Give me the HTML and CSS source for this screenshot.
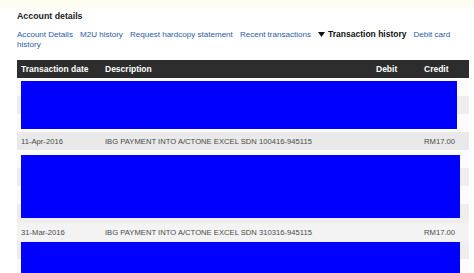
FILE: index.html
```html
<!DOCTYPE html>
<html>
<head>
<meta charset="utf-8">
<link rel="stylesheet" href="styles.css">
</head>
<body>
<div class="topband"></div>
<div class="page">
  <h1 class="title">Account details</h1>
  <div class="links">
    <a class="link">Account Details</a>
    <a class="link">M2U history</a>
    <a class="link">Request hardcopy statement</a>
    <a class="link">Recent transactions</a>
    <span class="link active"><svg class="caret" width="7" height="5" viewBox="0 0 7 5"><polygon points="0,0 7,0 3.5,5" fill="#111"/></svg>Transaction history</span>
    <a class="link">Debit card history</a>
  </div>
  <div class="table">
    <div class="row head">
      <div class="c date">Transaction date</div>
      <div class="c desc">Description</div>
      <div class="c debit">Debit</div>
      <div class="c credit">Credit</div>
    </div>
    <div class="group">
      <div class="stripe s1"></div>
      <div class="stripe s2"></div>
      <div class="stripe s1"></div>
      <div class="redact ra"></div>
    </div>
    <div class="row data r1">
      <div class="c date">11-Apr-2016</div>
      <div class="c desc">IBG PAYMENT INTO A/CTONE EXCEL SDN 100416-945115</div>
      <div class="c debit"></div>
      <div class="c amt">RM17.00</div>
    </div>
    <div class="group">
      <div class="stripe s1"></div>
      <div class="stripe s2"></div>
      <div class="stripe s1"></div>
      <div class="stripe s2 tall"></div>
      <div class="redact rb"></div>
    </div>
    <div class="row data r2">
      <div class="c date">31-Mar-2016</div>
      <div class="c desc">IBG PAYMENT INTO A/CTONE EXCEL SDN 310316-945115</div>
      <div class="c debit"></div>
      <div class="c amt">RM17.00</div>
    </div>
    <div class="group">
      <div class="stripe s2"></div>
      <div class="stripe s1"></div>
      <div class="redact rc"></div>
    </div>
  </div>
</div>
</body>
</html>
```

FILE: styles.css
```css
html, body {
  margin: 0;
  padding: 0;
  background: #ffffff;
  font-family: "Liberation Sans", Arial, sans-serif;
  overflow: hidden;
}
.topband {
  height: 8px;
  background: #fdfdf1;
}
.page {
  padding-left: 17px;
  width: 452px;
}
.title {
  margin: 3px 0 0 0;
  font-size: 8.8px;
  line-height: 11px;
  font-weight: bold;
  color: #222;
}
.links {
  margin-top: 7px;
  font-size: 8.05px;
  line-height: 10px;
  color: #2a5ca6;
}
.link {
  margin-right: 4.8px;
}
.active {
  color: #111;
  font-weight: bold;
  font-size: 8.5px;
}
.caret {
  margin-right: 3px;
  vertical-align: 0;
}
.table {
  margin-top: 10px;
}
.row {
  display: grid;
  grid-template-columns: 84px 1fr 50px 49px;
  align-items: center;
}
.head {
  height: 18px;
  background: #2d2d2d;
  color: #fff;
  font-weight: bold;
  font-size: 8.5px;
}
.c {
  padding-left: 4px;
  white-space: nowrap;
}
.head .debit {
  padding-left: 6px;
}
.data {
  height: 18px;
  font-size: 7.65px;
  color: #4a4a4a;
}
.r1 { background: #e9e9e9; }
.r2 { background: #f3f3f3; }
.amt {
  text-align: right;
  padding-right: 14px;
}
.group {
  position: relative;
}
.stripe {
  height: 18px;
}
.stripe.tall { height: 19px; }
.s1 { background: #fbfbfb; }
.s2 { background: #eeeeee; }
.redact {
  position: absolute;
  left: 4px;
  background: #0000ff;
}
.ra { top: 3px; bottom: 3px; right: 12px; }
.rb { top: 5px; bottom: 5px; right: 9px; }
.rc { top: 1px; bottom: 0; right: 9px; border-bottom: 2px solid #7f7fff; }
```
